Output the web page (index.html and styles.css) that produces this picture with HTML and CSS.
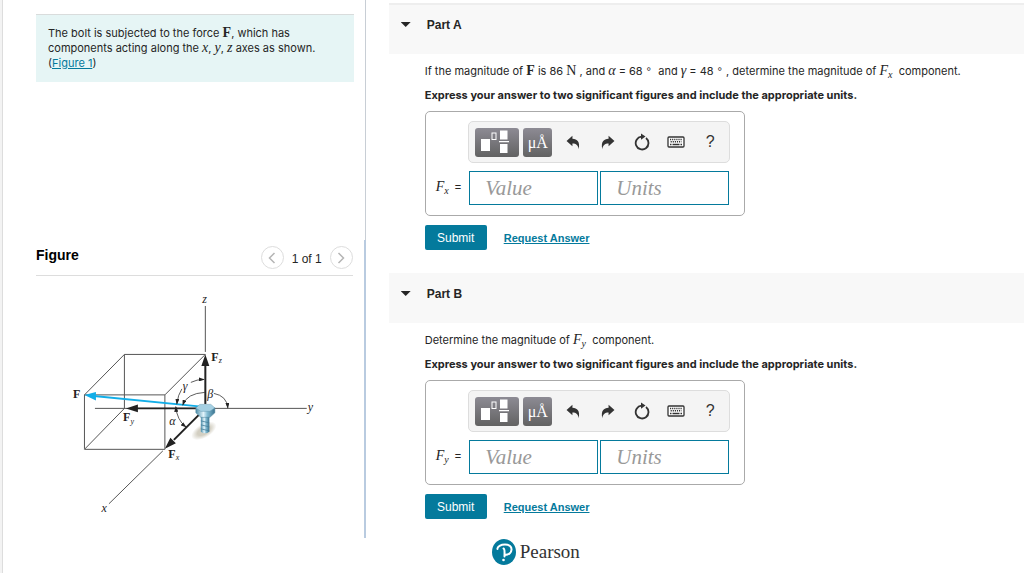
FILE: index.html
```html
<!DOCTYPE html>
<html lang="en">
<head>
<meta charset="utf-8">
<meta name="viewport" content="width=device-width, initial-scale=1">
<title>Bolt force components</title>
<link rel="stylesheet" href="styles.css">
</head>
<body>
<svg class="sprite" aria-hidden="true">
  <symbol id="undo" viewBox="0 0 14 14"><path d="M0.5 5.6 6 .8V3.6C10.500 3.800 13.200 6.300 11.900 13.200 11.300 9.800 9.600 8 6 8V10.600Z"/></symbol>
  <symbol id="redo" viewBox="0 0 14 14"><path d="M13.500 5.600 8 .8V3.600C3.500 3.800 .8 6.300 2.100 13.200 2.700 9.800 4.400 8 8 8V10.600Z"/></symbol>
  <symbol id="reset" viewBox="0 0 16 18"><path d="M12 5A6.400 6.400 0 1 1 7.500 3.700" fill="none" stroke="currentColor" stroke-width="1.800"/><path d="M7 .5 11.500 3.600 7 6.700Z"/></symbol>
  <symbol id="keys" viewBox="0 0 18 12"><rect x="1" y="1" width="16" height="10" rx="1" fill="#fff" stroke="currentColor" stroke-width="1.300"/><path d="M3 3.500H15M3.600 5.800H14.500" fill="none" stroke="currentColor" stroke-width="1.400" stroke-dasharray="1.200 .9"/><path d="M3 8.500H4.500M5.500 8.500H12.500M13.500 8.500H15" fill="none" stroke="currentColor" stroke-width="1.300"/></symbol>
  <symbol id="template" viewBox="0 0 44 29"><g fill="#fff"><path d="M6 11h9v12H6zM25 2.500h7.500v9H25zM25 16h7.500v9H25zM24 13h10v1.200H24z"/></g><rect x="17" y="5" width="4" height="6.500" fill="none" stroke="#fff"/></symbol>
</svg>
<div class="page">
  <aside class="side">
    <section class="intro">
      <p class="statement">The bolt is subjected to the force <b class="math">F</b>, which has components acting along the <i class="math">x</i>, <i class="math">y</i>, <i class="math">z</i> axes as shown. (<a href="#figure">Figure 1</a>)</p>
    </section>
    <section class="figure" id="figure">
      <header class="figure-head">
        <h2>Figure</h2>
        <nav class="pager" aria-label="Figures">
          <button type="button" aria-label="Previous figure"><svg viewBox="0 0 10 12"><path d="M7.500 1 2.500 6l5 5"/></svg></button>
          <span>1 of 1</span>
          <button type="button" aria-label="Next figure"><svg viewBox="0 0 10 12"><path d="m2.500 1 5 5-5 5"/></svg></button>
        </nav>
      </header>
      <svg class="diagram" viewBox="36 276 317 250" role="img" aria-label="Bolt with force F and its components">
        <defs>
          <marker id="arc-tip" markerWidth="6" markerHeight="4" refX="5" refY="2" orient="auto-start-reverse" markerUnits="userSpaceOnUse"><path d="M0 0 6 2 0 4Z" fill="#222"/></marker>
          <linearGradient id="steel"><stop offset="0" stop-color="#4c8eaa"/><stop offset=".4" stop-color="#e3f4fb"/><stop offset=".6" stop-color="#85bdd4"/><stop offset="1" stop-color="#39738f"/></linearGradient>
          <radialGradient id="shade"><stop offset=".5" stop-color="#d3cfc2"/><stop offset="1" stop-color="#d3cfc2" stop-opacity="0"/></radialGradient>
        </defs>
        <g fill="none" stroke="#555">
          <path d="M205.500 306V352M95 408.500H307M163 451 109 504M124.500 354.500H205.500L165 395H84.500ZV408.500L84.500 449.500H165V395M84.500 395V449"/>
        </g>
        <ellipse cx="204" cy="431" rx="14" ry="7" fill="url(#shade)" transform="rotate(-30 204 431)"/>
        <g stroke="#222" stroke-width="2"><path d="M205.500 404V364M200 408.500H137M200 414 174 440"/></g>
        <path d="M205.500 354.500 209.500 366H201.500ZM126 408.500 138 404.500V412.500ZM165 449 170.500 438 176 443.500Z" fill="#222"/>
        <path d="M199 406.500 94 396.200" stroke="#12aee8" stroke-width="2"/><path d="M84.500 395 96 392V400.500Z" fill="#12aee8"/>
        <g fill="none" stroke="#333" stroke-width=".8"><path d="M204 379.500Q197 379.500 191 382.500" marker-start="url(#arc-tip)"/><path d="M182 389Q178 395 177 404" marker-end="url(#arc-tip)"/><path d="M183 405Q187 393.500 205 392.500" marker-start="url(#arc-tip)"/><path d="M214 393.500Q227 396 228 408" marker-end="url(#arc-tip)"/><path d="M176 407Q177 420 186 427" marker-start="url(#arc-tip)" marker-end="url(#arc-tip)"/></g>
        <path d="M201 415H209.500V432Q205 435 201 432Z" fill="url(#steel)"/>
        <path d="M201 421 209.500 423M201 425 209.500 427M201 429 209.500 431" stroke="#457f99" stroke-width=".8"/>
        <path d="M196 408V413L201 417.500H210L215 413V408Z" fill="url(#steel)" stroke="#477f98" stroke-width=".5"/>
        <path d="M196 408 200 404.500H211L215 408 210 411.500H201Z" fill="#a5d0e3" stroke="#6399b0" stroke-width=".5"/>
        <g class="label">
          <text class="it" x="202.500" y="303">z</text><text class="it" x="308" y="411">y</text><text class="it" x="101.500" y="512">x</text>
          <text class="bd" x="73" y="398">F</text>
          <text class="bd" x="211.500" y="361">F</text><text class="sub" x="219" y="363">z</text>
          <text class="bd" x="123" y="421">F</text><text class="sub" x="130.500" y="424">y</text>
          <text class="bd" x="168.500" y="458">F</text><text class="sub" x="176" y="460">x</text>
          <text class="it" x="183" y="390">γ</text><text class="it" x="207.500" y="398">β</text><text class="it" x="169.500" y="425">α</text>
        </g>
      </svg>
    </section>
  </aside>
  <main class="work">
    <section class="part">
      <header class="part-head ruled"><button type="button" class="toggle" aria-label="Collapse Part A"></button><h2>Part A</h2></header>
      <div class="part-body">
        <p class="question">If the magnitude of <b class="math">F</b> is 86 <span class="math">N</span> , and <i class="math">α</i> = 68 <span class="deg">∘</span>&nbsp; and <i class="math">γ</i> = 48 <span class="deg">∘</span> , determine the magnitude of <i class="math">F<sub>x</sub></i>&nbsp; component.</p>
        <p class="hint">Express your answer to two significant figures and include the appropriate units.</p>
        <div class="answer">
          <div class="toolbar">
            <button type="button" class="dark wide" aria-label="Templates"><svg><use href="#template"/></svg></button>
            <button type="button" class="dark" aria-label="Units symbols">μÅ</button>
            <button type="button" class="tool" aria-label="Undo"><svg><use href="#undo"/></svg></button>
            <button type="button" class="tool" aria-label="Redo"><svg><use href="#redo"/></svg></button>
            <button type="button" class="tool reset" aria-label="Reset"><svg><use href="#reset"/></svg></button>
            <button type="button" class="tool keys" aria-label="Keyboard"><svg><use href="#keys"/></svg></button>
            <button type="button" class="tool" aria-label="Help">?</button>
          </div>
          <label for="fx"><i class="math">F<sub>x</sub></i> &nbsp;=</label>
          <div class="fields"><input id="fx" type="text" placeholder="Value"><input type="text" placeholder="Units" aria-label="Units of Fx"></div>
        </div>
        <div class="actions"><button type="button" class="submit">Submit</button><a href="#request-a">Request Answer</a></div>
      </div>
    </section>
    <section class="part">
      <header class="part-head"><button type="button" class="toggle" aria-label="Collapse Part B"></button><h2>Part B</h2></header>
      <div class="part-body">
        <p class="question">Determine the magnitude of <i class="math">F<sub>y</sub></i>&nbsp; component.</p>
        <p class="hint">Express your answer to two significant figures and include the appropriate units.</p>
        <div class="answer">
          <div class="toolbar">
            <button type="button" class="dark wide" aria-label="Templates"><svg><use href="#template"/></svg></button>
            <button type="button" class="dark" aria-label="Units symbols">μÅ</button>
            <button type="button" class="tool" aria-label="Undo"><svg><use href="#undo"/></svg></button>
            <button type="button" class="tool" aria-label="Redo"><svg><use href="#redo"/></svg></button>
            <button type="button" class="tool reset" aria-label="Reset"><svg><use href="#reset"/></svg></button>
            <button type="button" class="tool keys" aria-label="Keyboard"><svg><use href="#keys"/></svg></button>
            <button type="button" class="tool" aria-label="Help">?</button>
          </div>
          <label for="fy"><i class="math">F<sub>y</sub></i> &nbsp;=</label>
          <div class="fields"><input id="fy" type="text" placeholder="Value"><input type="text" placeholder="Units" aria-label="Units of Fy"></div>
        </div>
        <div class="actions"><button type="button" class="submit">Submit</button><a href="#request-b">Request Answer</a></div>
      </div>
    </section>
    <footer class="brand">
      <svg viewBox="0 0 24 26" aria-hidden="true"><ellipse cx="12" cy="13" rx="12" ry="13" fill="#047a9c"/><path d="M5.500 10C5 7.500 9 5.500 13 5.500 22 5.500 21.500 15.500 13 16M11.500 9.500C13 10 12.500 12 12.500 17.500" fill="none" stroke="#fff" stroke-width="2" stroke-linecap="round"/><circle cx="11.500" cy="21" r="1.300" fill="#fff"/></svg>
      <span>Pearson</span>
    </footer>
  </main>
</div>
</body>
</html>
```
FILE: styles.css
```css
* { box-sizing: border-box; }
body { margin: 0; background: #fff; color: #252525; font: 11px/14px "Liberation Sans", Arial, sans-serif; }
h2, p { margin: 0; }
button, input { font-family: inherit; margin: 0; padding: 0; }
a { color: #047a9c; }
.sprite { display: none; }
.math { font-family: "Liberation Serif", "Times New Roman", serif; font-size: 14px; line-height: 1; }
.math sub { font-size: 10px; line-height: 1; vertical-align: -3px; }
.deg { font-family: "DejaVu Sans", sans-serif; font-size: 10px; line-height: 1; vertical-align: 3px; }

.page { display: grid; grid-template-columns: minmax(280px, 5fr) minmax(0, 9fr); min-height: 100vh; }
.side { border-left: 2px solid #f3f3f3; box-shadow: inset 1px 0 #ddd; }
.intro { min-height: 240px; padding: 14px 11px 0 34px; border-right: 1px solid #c8ced5; }
.statement { padding: 11px 24px 11px 12px; border-top: 1px solid #d9dcdc; background: #e6f5f5; font-family: Inter, "Liberation Sans", sans-serif; line-height: 15px; }
.figure { height: 298px; padding: 6px 11px 0 34px; border-right: 2px solid #b9cbe0; }
.figure-head { display: flex; align-items: center; justify-content: space-between; height: 30px; border-bottom: 1px solid #ddd; padding-bottom: 6px; }
.figure-head h2 { font-size: 14px; line-height: 16px; color: #000; padding-bottom: 6px; }
.pager { display: flex; align-items: center; gap: 8px; font-size: 12px; }
.pager span { padding-top: 3px; }
.pager button { display: grid; place-items: center; width: 23px; height: 23px; border: 1px solid #ddd; border-radius: 50%; background: #fff; }
.pager svg { width: 10px; height: 12px; fill: none; stroke: #b5b5b5; stroke-width: 1.5; }
.diagram { display: block; width: 100%; height: auto; }
.label { font-family: "Liberation Serif", serif; font-size: 12px; fill: #222; }
.label .it, .label .sub { font-style: italic; }
.label .bd { font-weight: bold; }
.label .sub { font-size: 8px; }

.work { padding: 3px 0 6px 23px; }
.part-head { display: flex; align-items: flex-start; gap: 16px; height: 50px; padding: 14px 12px 0; background: #f8f8f8; }
.part-head.ruled { height: 51px; padding-top: 13px; border-top: 2px solid #eee; }
.part-head h2 { font-size: 12px; line-height: 14px; }
.toggle { width: 10px; height: 5px; margin-top: 4px; border: 0; background: #252525; clip-path: polygon(0 0, 100% 0, 50% 100%); }
.part-body { padding: 9px 36px 23px; }
.question, .hint { font-family: Inter, "Liberation Sans", sans-serif; }
.question { min-height: 16px; line-height: 16px; }
.hint { margin-top: 8px; font-weight: 700; }
.answer { display: inline-grid; grid-template-columns: auto 262px; column-gap: 7px; row-gap: 8px; align-items: center; margin-top: 9px; padding: 9px 14px 10px 10px; border: 1px solid #aaa; border-radius: 5px; vertical-align: top; }
.toolbar { grid-column: 2; display: flex; align-items: center; height: 42px; padding: 0 2px 0 6px; border: 1px solid #ddd; border-radius: 5px; background: #f4f4f4; }
.dark { width: 29px; height: 29px; margin-right: 4px; border: 0; border-radius: 3px; background: linear-gradient(#8d8b94, #626262); color: #fff; font: 16px/29px "Liberation Serif", serif; }
.dark.wide { width: 44px; }
.dark svg { display: block; width: 44px; height: 29px; }
.tool { display: grid; place-items: center; flex: 1; height: 29px; border: 0; background: none; color: #333; font-size: 16px; }
.tool svg { width: 15px; height: 15px; fill: currentColor; }
.tool.reset svg { width: 16px; height: 18px; }
.tool.keys svg { width: 18px; height: 12px; }
.fields { display: grid; grid-template-columns: 1fr 1fr; gap: 2px; padding: 0 1px; }
.fields input { width: 100%; height: 34px; padding: 0 15px; border: 1px solid #047a9c; background: #fff; font: italic 21px/30px "Liberation Serif", serif; color: #252525; }
.fields input::placeholder { color: #999; opacity: 1; }
.actions { display: flex; align-items: center; gap: 17px; margin-top: 9px; }
.actions a { font-weight: bold; }
.submit { width: 62px; height: 25px; border: 0; border-radius: 2px; background: #047a9c; color: #fff; font-size: 12px; }
.brand { display: flex; align-items: center; gap: 4px; padding-left: 103px; margin-top: -3px; color: #333; font: 19px/26px "Liberation Serif", serif; }
.brand svg { width: 24px; height: 26px; }
```
